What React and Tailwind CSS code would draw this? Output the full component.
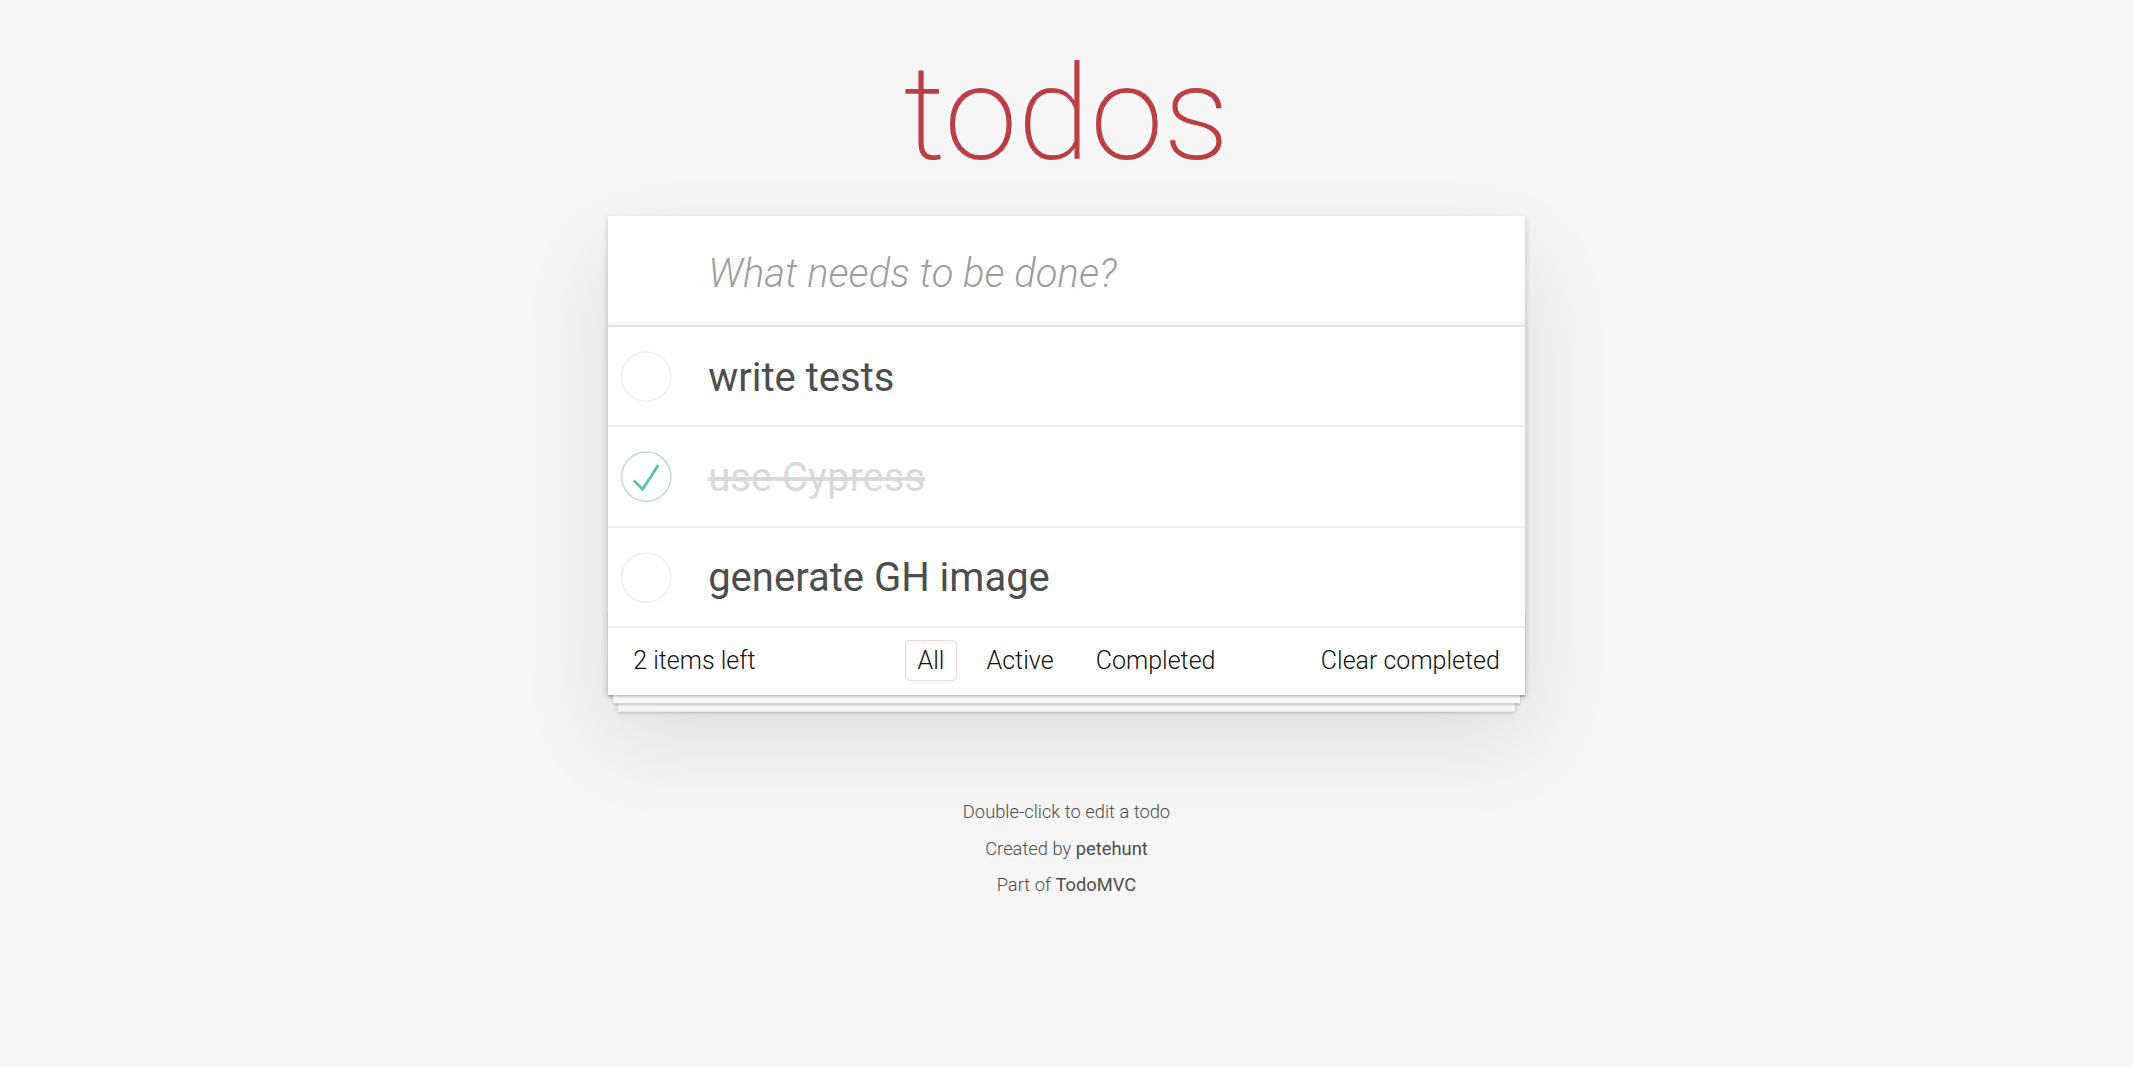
import React from 'react';

const todos = [
  { id: 1, title: 'write tests', completed: false },
  { id: 2, title: 'use Cypress', completed: true },
  { id: 3, title: 'generate GH image', completed: false },
];

function Toggle({ checked }) {
  return (
    <svg viewBox="-10 -18 100 135" className="w-[66.67px] h-[66.67px] shrink-0">
      <circle cx="50" cy="50" r="50" fill="none" stroke={checked ? '#bddad5' : '#ededed'} strokeWidth="3" />
      {checked && <path fill="#5dc2af" d="M72 25L42 71 27 56l-4 4 20 20 34-52z" />}
    </svg>
  );
}

export default function App() {
  return (
    <div className="min-h-screen bg-[#f5f5f5] font-['Roboto','Helvetica_Neue',Arial,sans-serif] font-light text-[23.33px] leading-[32.67px] text-[#111]">
      <div className="w-[916.67px] mx-auto">
        {/* Title */}
        <h1 className="pt-[48px] h-[181px] text-center text-[132px] leading-none font-extralight text-[#b83f45]">
          todos
        </h1>

        {/* Card */}
        <section className="mt-[34.67px] bg-white relative shadow-[0_3.3px_6.7px_0_rgba(0,0,0,0.2),0_41.7px_83.3px_0_rgba(0,0,0,0.1)]">
          <div className="h-[109.5px] pl-[100px] pr-[26.67px] pt-[7px] flex items-center bg-[rgba(0,0,0,0.003)] shadow-[inset_0_-3.3px_1.7px_rgba(0,0,0,0.03)]">
            <span className="text-[40px] italic font-light text-black/40">What needs to be done?</span>
          </div>

          <ul className="border-t-2 border-[#e6e6e6]">
            {todos.map(t => (
              <li key={t.id} className="h-[100.33px] flex items-center border-b-2 border-[#ededed] text-[40px]">
                <Toggle checked={t.completed} />
                <span
                  className={`ml-[33.33px] pt-[3px] leading-[48px] font-normal ${
                    t.completed ? 'text-[#d9d9d9] line-through' : 'text-[#4d4d4d]'
                  }`}
                >
                  {t.title}
                </span>
              </li>
            ))}
          </ul>

          {/* Footer */}
          <footer className="relative h-[66.67px] px-[25px] grid grid-cols-[1fr_auto_1fr] items-center text-[25px] text-[#111]">
            <div className="absolute inset-x-0 bottom-0 h-[83.33px] pointer-events-none shadow-[0_1.7px_1.7px_rgba(0,0,0,0.2),0_13.3px_0_-5px_#f6f6f6,0_15px_1.7px_-5px_rgba(0,0,0,0.2),0_26.7px_0_-10px_#f6f6f6,0_28.3px_3.3px_-10px_rgba(0,0,0,0.2)]" />
            <span className="relative">2 items left</span>
            <ul className="relative flex items-center gap-[6.9px]">
              <li>
                <a className="mx-[5px] px-[11.67px] py-[5px] border-[1.67px] rounded-[5px] border-[rgba(175,47,47,0.2)]">All</a>
              </li>
              <li>
                <a className="mx-[5px] px-[11.67px] py-[5px] border-[1.67px] rounded-[5px] border-transparent">Active</a>
              </li>
              <li>
                <a className="mx-[5px] px-[11.67px] py-[5px] border-[1.67px] rounded-[5px] border-transparent">Completed</a>
              </li>
            </ul>
            <span className="relative justify-self-end">Clear completed</span>
          </footer>
        </section>

        {/* Info */}
        <footer className="mt-[108.33px] text-center text-[18.33px] leading-none text-[#4d4d4d] [text-shadow:0_1.7px_0_rgba(255,255,255,0.5)]">
          <p>Double-click to edit a todo</p>
          <p className="mt-[18.33px]">
            Created by <a className="font-normal">petehunt</a>
          </p>
          <p className="mt-[18.33px]">
            Part of <a className="font-normal">TodoMVC</a>
          </p>
        </footer>
      </div>
    </div>
  );
}
